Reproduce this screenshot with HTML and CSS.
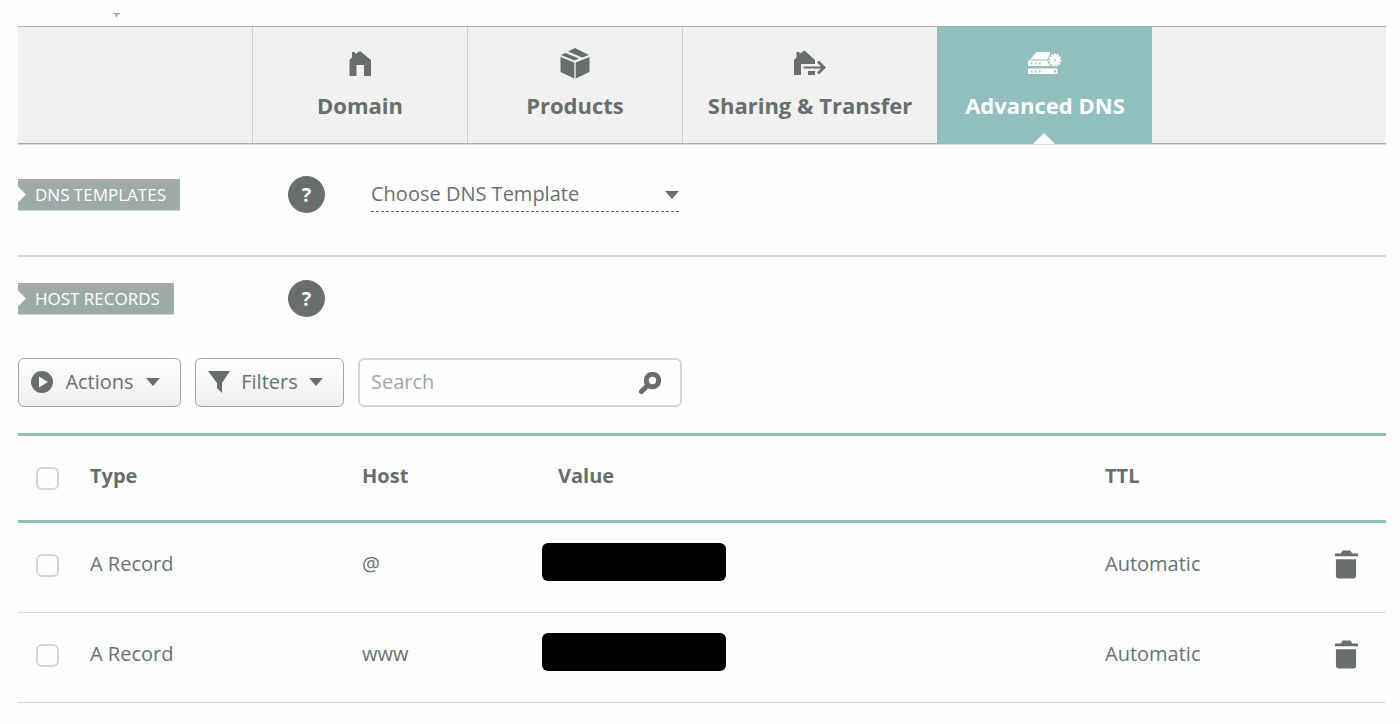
FILE: index.html
```html
<!DOCTYPE html>
<html lang="en">
<head>
<meta charset="utf-8">
<title>Advanced DNS</title>
<link rel="stylesheet" href="styles.css">
</head>
<body>
<svg class="pointer" viewBox="0 0 7 4" aria-hidden="true"><path d="M0 0H7V1H5L4 4H3L2 1H0Z"/></svg>
<nav class="tabs">
  <a class="tab" href="#domain">
    <svg class="tab-icon" viewBox="0 0 36 32" aria-hidden="true"><path d="M7.500 29V13L10 10.500V5H13V7L18 4L29 13V29H22V18H14.500V29Z"/></svg>
    Domain
  </a>
  <a class="tab" href="#products">
    <svg class="tab-icon" viewBox="0 0 36 32" aria-hidden="true"><path d="M3.500 10L17.300 15.500V31.500L3.500 25ZM32.500 10V25L18.700 31.500V15.500ZM4 8L8.500 6L22 11.500L17.500 13.500ZM11 4.500L18 1L32 8L25 10.500Z"/></svg>
    Products
  </a>
  <a class="tab tab-wide" href="#sharing">
    <svg class="tab-icon" viewBox="0 0 36 32" aria-hidden="true"><path d="M2 28V13L4.500 10.500V5H7.500V7L12.500 3.500L23 13V17H9V28ZM11.500 19.500H29L25 15.500L27 13.500L34 20.500L27 27.500L25 25.500L29 21.500H11.500ZM16 24H23V28H16Z"/></svg>
    Sharing &amp; Transfer
  </a>
  <a class="tab tab-active" href="#dns" aria-current="page">
    <svg class="tab-icon" viewBox="0 0 36 32" aria-hidden="true"><path d="M9.500 5H23V17H1V14L4 11.500ZM1 14H23L26 19H1ZM1 21.500H30.500V27H1Z"/><g class="hole"><path d="M3 12.500H21V13.500H3Z"/><circle cx="28" cy="13" r="7.500"/></g><circle cx="28" cy="13" r="5"/><circle class="gear" cx="28" cy="13" r="5.500"/><g class="hole"><circle cx="28" cy="13" r="1"/><path d="M4 15.500H5.500V17.500H4ZM8 15.500H9.500V17.500H8ZM12 15.500H13.500V17.500H12ZM4 23.500H5.500V25.500H4ZM8 23.500H9.500V25.500H8ZM12 23.500H13.500V25.500H12ZM27 23.500H29V25.500H27Z"/></g></svg>
    Advanced DNS
  </a>
</nav>
<main>
  <section class="section section-ruled">
    <h2 class="ribbon-cell"><span class="ribbon">DNS TEMPLATES</span></h2>
    <button class="help" type="button" aria-label="Help with DNS templates">?</button>
    <div class="template">
      <select class="template-select" aria-label="DNS template"><option>Choose DNS Template</option></select>
      <svg class="caret" viewBox="0 0 14 8" aria-hidden="true"><path d="M0 0H14L7 8Z"/></svg>
    </div>
  </section>
  <section class="section">
    <h2 class="ribbon-cell"><span class="ribbon">HOST RECORDS</span></h2>
    <button class="help" type="button" aria-label="Help with host records">?</button>
  </section>
  <div class="toolbar">
    <button class="btn btn-actions" type="button">
      <svg class="btn-icon" viewBox="0 0 22 22" aria-hidden="true"><path fill-rule="evenodd" d="M11 0A11 11 0 1 1 11 22A11 11 0 1 1 11 0ZM8 5.500V16.500L17 11Z"/></svg>
      Actions
      <svg class="caret" viewBox="0 0 14 8" aria-hidden="true"><path d="M0 0H14L7 8Z"/></svg>
    </button>
    <button class="btn btn-filters" type="button">
      <svg class="btn-icon" viewBox="0 0 22 22" aria-hidden="true"><path d="M0 0H22L14 12V22L9 17V12Z"/></svg>
      Filters
      <svg class="caret" viewBox="0 0 14 8" aria-hidden="true"><path d="M0 0H14L7 8Z"/></svg>
    </button>
    <div class="search">
      <input class="search-input" type="text" placeholder="Search" aria-label="Search records">
      <svg class="btn-icon" viewBox="0 0 22 22" aria-hidden="true"><circle class="lens" cx="13.500" cy="8.500" r="6.200"/><path class="handle" d="M8.500 13.500L2.500 19.500"/></svg>
    </div>
  </div>
  <table class="records">
    <colgroup><col class="col-check"><col class="col-type"><col class="col-host"><col class="col-value"><col class="col-ttl"><col class="col-remove"></colgroup>
    <thead>
      <tr>
        <th><input class="check" type="checkbox" aria-label="Select all"></th>
        <th>Type</th><th>Host</th><th class="value-head">Value</th><th>TTL</th><td></td>
      </tr>
    </thead>
    <tbody>
      <tr>
        <td><input class="check" type="checkbox" aria-label="Select @ record"></td>
        <td>A Record</td><td>@</td><td><span class="redacted"></span></td><td>Automatic</td>
        <td class="remove-cell"><button class="remove" type="button" aria-label="Delete @ record"><svg class="trash" viewBox="0 0 24 30" aria-hidden="true"><path d="M0 4H6L8 1H16L18 4H24V7H0ZM1 10H22V27Q22 30 19 30H4Q1 30 1 27Z"/></svg></button></td>
      </tr>
      <tr>
        <td><input class="check" type="checkbox" aria-label="Select www record"></td>
        <td>A Record</td><td>www</td><td><span class="redacted"></span></td><td>Automatic</td>
        <td class="remove-cell"><button class="remove" type="button" aria-label="Delete www record"><svg class="trash" viewBox="0 0 24 30" aria-hidden="true"><path d="M0 4H6L8 1H16L18 4H24V7H0ZM1 10H22V27Q22 30 19 30H4Q1 30 1 27Z"/></svg></button></td>
      </tr>
    </tbody>
  </table>
</main>
</body>
</html>
```
FILE: styles.css
```css
* { box-sizing: border-box; }
body {
  margin: 0;
  padding: 13px 14px 20px 18px;
  background: #fefefe;
  color: #667371;
  font: 400 20px/28px "Open Sans", "Noto Sans", sans-serif;
}
button, input, select { font: inherit; color: inherit; }
svg { display: block; flex: none; fill: #686e6c; }
.pointer { width: 7px; height: 4px; margin: 0 0 9px 95px; fill: #8faaa7; }

.tabs {
  display: flex;
  justify-content: center;
  background: #f1f1f1;
  border-top: 1px solid #98b3b0;
  border-bottom: 1px solid #98b3b0;
  box-shadow: 0 1px #d5e0df;
}
.tab {
  display: flex;
  flex-direction: column;
  align-items: center;
  gap: 12px;
  width: 215px;
  height: 116px;
  padding-top: 20px;
  border-left: 1px solid #c6d5d3;
  color: #686e6c;
  font-size: 22px;
  font-weight: 700;
  text-decoration: none;
  white-space: nowrap;
}
.tab-wide { width: 255px; }
.tab-icon { width: 36px; height: 32px; }
.tab-active {
  position: relative;
  height: 117px;
  margin-bottom: -1px;
  background: #90bfbe;
  border-color: #90bfbe;
  color: #fff;
}
.tab-active svg { fill: #fff; }
.tab-active .hole { fill: #90bfbe; }
.tab-active .gear { fill: none; stroke: #fff; stroke-width: 2; stroke-dasharray: 2 1; }
.tab-active::after {
  content: "";
  position: absolute;
  bottom: 0;
  left: 50%;
  margin-left: -12px;
  border: 11px solid transparent;
  border-top: 0;
  border-bottom-color: #fefefe;
}

.section { display: flex; align-items: center; padding: 23px 0 20px; }
.section-ruled { padding: 32px 0 42px; border-bottom: 2px solid #cfd8d7; }
.ribbon-cell { width: 270px; margin: 0; font-size: 17px; font-weight: 400; line-height: 32px; }
.ribbon {
  display: inline-block;
  padding: 0 14px 0 17px;
  background: #9daaa8;
  color: #fff;
  vertical-align: top;
  clip-path: polygon(0 0, 100% 0, 100% 100%, 0 100%, 0 calc(50% + 8px), 8px 50%, 0 calc(50% - 8px));
}
.help {
  width: 37px;
  height: 37px;
  padding: 0;
  border: 0;
  border-radius: 50%;
  background: #686e6c;
  color: #fff;
  font-weight: 700;
}
.template { display: grid; align-items: center; width: 308px; margin-left: 46px; }
.template > * { grid-area: 1 / 1; }
.template-select {
  appearance: none;
  height: 35px;
  padding: 0;
  border: 0;
  border-bottom: 1px dashed #5f6d6b;
  border-radius: 0;
  background: none;
}
.template .caret { justify-self: end; }
.caret { width: 14px; height: 8px; pointer-events: none; }

.toolbar { display: flex; gap: 14px; padding: 21px 0 26px; }
.btn {
  display: flex;
  align-items: center;
  justify-content: space-between;
  height: 49px;
  padding: 0 20px 2px 12px;
  border: 1px solid #9daaa8;
  border-radius: 6px;
  background: linear-gradient(#fefefe, #efefef);
}
.btn-actions { width: 163px; }
.btn-filters { width: 149px; }
.btn-icon { width: 22px; height: 22px; }
.search {
  display: flex;
  align-items: center;
  width: 324px;
  height: 49px;
  padding: 0 19px 0 11px;
  border: 2px solid #cfd8d7;
  border-radius: 6px;
}
.search-input { flex: 1; min-width: 0; padding: 0 0 2px; border: 0; outline: 0; background: none; }
.search-input::placeholder { color: #9ca9a7; opacity: 1; }
.lens { fill: none; stroke: #686e6c; stroke-width: 5; }
.handle { stroke: #686e6c; stroke-width: 5; stroke-linecap: round; }

.records { width: 100%; border-collapse: separate; border-spacing: 0; table-layout: fixed; }
.col-check { width: 72px; }
.col-type { width: 272px; }
.col-host { width: 180px; }
.col-ttl { width: 200px; }
.col-remove { width: 81px; }
th, td { height: 90px; padding: 0; text-align: left; vertical-align: middle; border-bottom: 1px solid #cfd8d7; }
thead th, thead td { border-top: 3px solid #90bfbe; border-bottom: 3px solid #90bfbe; }
th { font-weight: 700; color: #686e6c; padding-bottom: 4px; }
td { padding-bottom: 8px; }
.value-head { padding-left: 16px; }
.check {
  appearance: none;
  display: block;
  width: 23px;
  height: 23px;
  margin: 4px 0 0 18px;
  border: 2px solid #cfd8d7;
  border-radius: 6px;
  background: #fefefe;
}
.redacted { display: block; width: 184px; height: 38px; margin-bottom: 4px; border-radius: 6px; background: #000; }
.remove { display: block; margin-left: auto; margin-right: 28px; padding: 0; border: 0; background: none; }
.trash { width: 23px; height: 30px; }
```
